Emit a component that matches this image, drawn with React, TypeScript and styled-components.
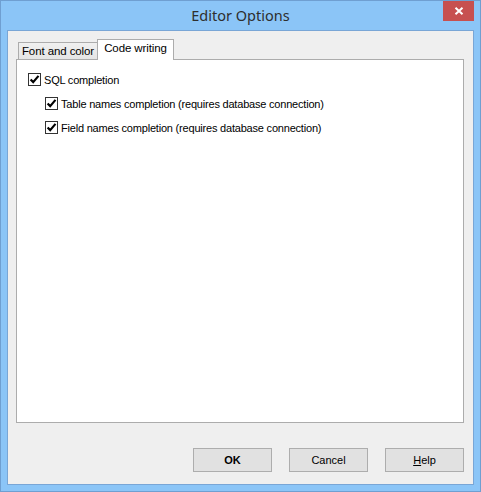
import { FunctionComponent, ReactNode } from "react";
import styled, { createGlobalStyle } from "styled-components";

const GlobalStyle = createGlobalStyle`
  html, body {
    margin: 0;
    padding: 0;
    background: #ffffff;
  }
  * {
    box-sizing: border-box;
  }
`;

const uiFont = `"Liberation Sans", "DejaVu Sans", sans-serif`;

const Window = styled.div`
  width: 481px;
  height: 492px;
  display: flex;
  flex-direction: column;
  background: #8bc5f7;
  border: 1px solid #6f9fd1;
`;

const TitleBar = styled.div`
  height: 29px;
  display: grid;
  grid-template-columns: 1fr auto 1fr;
  align-items: start;
`;

const Title = styled.div`
  grid-column: 2;
  line-height: 28px;
  font-family: "Noto Sans", "Open Sans", sans-serif;
  font-size: 14.5px;
  color: #2e2e2e;
`;

const CloseButton = styled.div`
  grid-column: 3;
  justify-self: end;
  width: 31px;
  height: 20px;
  margin-right: 6px;
  background: #c75050;
  display: flex;
  align-items: center;
  justify-content: center;
`;

const Client = styled.div`
  flex: 1;
  margin: 0 6px 6px;
  border: 1px solid #79a6d6;
  background: #efefef;
  display: flex;
  flex-direction: column;
  padding: 8px 9px 12px 8px;
`;

const TabRow = styled.div`
  display: flex;
  align-items: flex-end;
  padding-left: 2px;
  height: 20px;
`;

const Tab = styled.div<{ $active?: boolean; $width: number }>`
  position: relative;
  width: ${(p) => p.$width}px;
  height: ${(p) => (p.$active ? 21 : 17)}px;
  margin-bottom: ${(p) => (p.$active ? -1 : 0)}px;
  margin-right: ${(p) => (p.$active ? 0 : -1)}px;
  z-index: ${(p) => (p.$active ? 2 : 1)};
  border: 1px solid #acacac;
  border-bottom: none;
  background: ${(p) =>
    p.$active ? "#ffffff" : "linear-gradient(#f0f0f0, #e5e5e5)"};
  font-family: ${uiFont};
  font-size: 11.5px;
  letter-spacing: -0.1px;
  color: #000;
  text-align: center;
  line-height: ${(p) => (p.$active ? 17 : 16)}px;
`;

const Panel = styled.div`
  flex: 1;
  border: 1px solid #acacac;
  background: #ffffff;
  padding: 13px 11px;
  display: flex;
  flex-direction: column;
  gap: 11px;
`;

const Row = styled.label<{ $indent?: number }>`
  display: flex;
  align-items: center;
  gap: 3px;
  height: 13px;
  margin-left: ${(p) => p.$indent ?? 0}px;
  font-family: ${uiFont};
  font-size: 11px;
  letter-spacing: -0.2px;
  color: #000;
`;

const Box = styled.span`
  width: 13px;
  height: 13px;
  border: 1px solid #333333;
  background: #ffffff;
  display: flex;
  align-items: center;
  justify-content: center;
  flex: none;
`;

const ButtonBar = styled.div`
  display: flex;
  justify-content: flex-end;
  gap: 17px;
  margin-top: 25px;
`;

const Button = styled.div<{ $primary?: boolean }>`
  width: 79px;
  height: 24px;
  border: 1px solid #adadad;
  background: #e1e1e1;
  display: flex;
  align-items: center;
  justify-content: center;
  font-family: ${uiFont};
  font-size: 11px;
  font-weight: ${(p) => (p.$primary ? 700 : 400)};
  color: #000;

  u {
    text-decoration: underline;
    text-underline-offset: 1px;
  }
`;

const CheckMark = () => (
  <svg width="11" height="11" viewBox="0 0 11 11">
    <path
      d="M1.6 5.4 L4.2 8.1 L9.5 1.9"
      fill="none"
      stroke="#000"
      strokeWidth="2.2"
    />
  </svg>
);

interface ICheckRowProps {
  indent?: number;
  children: ReactNode;
}

const CheckRow: FunctionComponent<ICheckRowProps> = (props) => (
  <Row $indent={props.indent}>
    <Box>
      <CheckMark />
    </Box>
    <span>{props.children}</span>
  </Row>
);

const App = () => {
  return (
    <>
      <GlobalStyle />
      <Window>
        <TitleBar>
          <Title>Editor Options</Title>
          <CloseButton>
            <svg width="10" height="8" viewBox="0 0 10 8">
              <path
                d="M1.5 0.8 L8.5 7.2 M8.5 0.8 L1.5 7.2"
                stroke="#fff"
                strokeWidth="2"
              />
            </svg>
          </CloseButton>
        </TitleBar>
        <Client>
          <TabRow>
            <Tab $width={80}>Font and color</Tab>
            <Tab $active $width={77}>
              Code writing
            </Tab>
          </TabRow>
          <Panel>
            <CheckRow>SQL completion</CheckRow>
            <CheckRow indent={17}>
              Table names completion (requires database connection)
            </CheckRow>
            <CheckRow indent={17}>
              Field names completion (requires database connection)
            </CheckRow>
          </Panel>
          <ButtonBar>
            <Button $primary>OK</Button>
            <Button>Cancel</Button>
            <Button>
              <u>H</u>elp
            </Button>
          </ButtonBar>
        </Client>
      </Window>
    </>
  );
};

export default App;
